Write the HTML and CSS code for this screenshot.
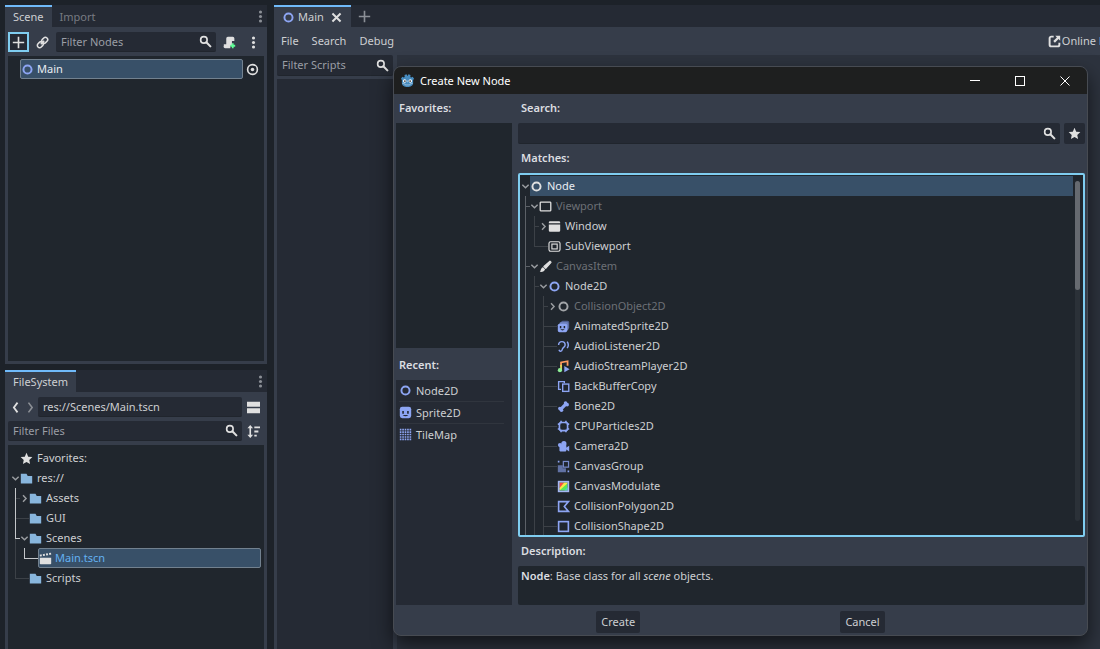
FILE: index.html
```html
<!DOCTYPE html>
<html lang="en">
<head>
    <meta charset="UTF-8">
    <meta name="viewport" content="width=device-width, initial-scale=1.0">
    <title>Create New Node</title>
    <link rel="stylesheet" href="styles.css">
</head>
<body>
    <!-- icon set -->
    <svg class="sprite" aria-hidden="true">
        <symbol id="i-circle" viewBox="0 0 16 16"><circle cx="8" cy="8" r="5" fill="none" stroke="currentColor" stroke-width="2.4"/></symbol>
        <symbol id="i-search" viewBox="0 0 16 16"><circle cx="6" cy="6" r="4" fill="none" stroke="currentColor" stroke-width="2"/><path d="M9 9l5 5" stroke="currentColor" stroke-width="2.6" stroke-linecap="round"/></symbol>
        <symbol id="i-dots" viewBox="0 0 16 16"><g fill="currentColor"><circle cx="8" cy="2.5" r="1.9"/><circle cx="8" cy="8" r="1.9"/><circle cx="8" cy="13.5" r="1.9"/></g></symbol>
        <symbol id="i-plus" viewBox="0 0 16 16"><path d="M8 1v14M1 8h14" stroke="currentColor" stroke-width="2"/></symbol>
        <symbol id="i-close" viewBox="0 0 16 16"><path d="M3 3l10 10M13 3L3 13" stroke="currentColor" stroke-width="2.4"/></symbol>
        <symbol id="i-link" viewBox="0 0 16 16"><g transform="rotate(-45 8 8)" fill="none" stroke="currentColor" stroke-width="1.9"><rect x="0.2" y="5.2" width="8" height="5.6" rx="2.8"/><rect x="7.8" y="5.2" width="8" height="5.6" rx="2.8"/><path d="M5 8h6"/></g></symbol>
        <symbol id="i-script-add" viewBox="0 0 16 16"><path d="M6 1a2 2 0 0 0-2 2v7H1v2a2 2 0 0 0 2 3h6v-3h2V6h3V3a2 2 0 0 0-2-2z" fill="#e0e0e0"/><path d="M12 9v6M9 12h6" stroke="#5fff97" stroke-width="2.2"/></symbol>
        <symbol id="i-eye" viewBox="0 0 16 16"><circle cx="8" cy="8" r="6" fill="none" stroke="currentColor" stroke-width="2"/><circle cx="8" cy="8" r="2.2" fill="currentColor"/></symbol>
        <symbol id="i-back" viewBox="0 0 16 16"><path d="M10.500 2L6 8l4.500 6" fill="none" stroke="currentColor" stroke-width="2.2"/></symbol>
        <symbol id="i-forward" viewBox="0 0 16 16"><path d="M5.500 2L10 8l-4.500 6" fill="none" stroke="currentColor" stroke-width="2"/></symbol>
        <symbol id="i-split" viewBox="0 0 16 16"><path d="M0 1h16v6H0zM0 9h16v6H0z" fill="currentColor"/></symbol>
        <symbol id="i-sort" viewBox="0 0 16 16"><path d="M4 0L.5 4H3v8H.5L4 16l3.500-4H5V4h2.500z" fill="currentColor"/><path d="M9 3h7M9 8h5M9 13h3" stroke="currentColor" stroke-width="2.200"/></symbol>
        <symbol id="i-star" viewBox="0 0 16 16"><path d="M8 1l2.100 4.700 5.100.6-3.800 3.400 1 5L8 12.200l-4.400 2.500 1-5L.8 6.300l5.100-.6z" fill="currentColor"/></symbol>
        <symbol id="i-folder" viewBox="0 0 16 16"><path d="M1 2h7l1.500 3H15v9H1z" fill="#88b6dd"/></symbol>
        <symbol id="i-scene" viewBox="0 0 16 16"><path d="M1 7h14v7a1 1 0 0 1-1 1H2a1 1 0 0 1-1-1z" fill="#e0e0e0"/><path d="M1 4.500L15 2" stroke="#e0e0e0" stroke-width="2.400" stroke-dasharray="2.400 1.500"/></symbol>
        <symbol id="i-down" viewBox="0 0 8 8"><path d="M1.200 2.500L4 5.200l2.800-2.700" fill="none" stroke="currentColor" stroke-width="1.300"/></symbol>
        <symbol id="i-right" viewBox="0 0 8 8"><path d="M2.700 1.200L5.400 4 2.700 6.800" fill="none" stroke="currentColor" stroke-width="1.300"/></symbol>
        <symbol id="i-external" viewBox="0 0 16 16"><path d="M7 2H4a2 2 0 0 0-2 2v8a2 2 0 0 0 2 2h8a2 2 0 0 0 2-2V9.500" fill="none" stroke="currentColor" stroke-width="2.400"/><path d="M9 1h6v6l-2-2-4.500 4.500-2-2L11 3z" fill="currentColor"/></symbol>
        <symbol id="i-viewport" viewBox="0 0 16 16"><rect x="1.500" y="2.500" width="13" height="11" rx="1" fill="none" stroke="currentColor" stroke-width="1.600"/></symbol>
        <symbol id="i-window" viewBox="0 0 16 16"><path d="M1 4V3a1.500 1.500 0 0 1 1.500-1.500h11A1.500 1.500 0 0 1 15 3v1zM1 5.500h14V13a1.500 1.500 0 0 1-1.500 1.500h-11A1.500 1.500 0 0 1 1 13z" fill="currentColor"/></symbol>
        <symbol id="i-subviewport" viewBox="0 0 16 16"><g fill="none" stroke="currentColor" stroke-width="1.400"><rect x="1.200" y="2.200" width="13.600" height="11.600" rx="2"/><rect x="4.800" y="5" width="6.500" height="6"/></g></symbol>
        <symbol id="i-brush" viewBox="0 0 16 16"><path d="M13.500 1.500l1.300 1.300-6.500 7.500L6 8z" fill="currentColor" stroke="currentColor" stroke-width="1.400" stroke-linejoin="round"/><path d="M5 9l2.500 2.500C7 14 4 15 1 14.500 2.500 13.500 2 9.500 5 9z" fill="currentColor"/></symbol>
        <symbol id="i-animsprite" viewBox="0 0 16 16"><rect x="5" y="1" width="10" height="10" rx="2" fill="#4f5f90"/><rect x="3" y="2.500" width="11" height="10.500" rx="2" fill="#6d80bd"/><rect x="1" y="4.500" width="11.500" height="10.500" rx="2" fill="#8da5f3"/><path d="M3.500 7.500h1.800v2.500H3.500zM8.200 7.500H10v2.500H8.200zM4 11.500h5.500q-2.700 2.600-5.500 0z" fill="#20262d"/></symbol>
        <symbol id="i-listener" viewBox="0 0 16 16"><g fill="none" stroke="#8da5f3" stroke-width="1.800"><path d="M2 6a4 4 0 0 1 8 0c0 3-3 3-3.500 5.500C6 14.500 3 14.500 2.500 12"/><path d="M12.500 2q2.800 4 0 8"/></g></symbol>
        <symbol id="i-stream" viewBox="0 0 16 16"><path d="M5 8V3l8-1.500V7" fill="none" stroke="#ff9a5f" stroke-width="2.200"/><path d="M5 6v6.500" stroke="#e1da5b" stroke-width="2.200"/><circle cx="3.600" cy="12.500" r="2.600" fill="#8eef97"/><path d="M9 7.500l6.500 3.800L9 15z" fill="#8da5f3"/></symbol>
        <symbol id="i-backbuffer" viewBox="0 0 16 16"><g fill="none" stroke="#8da5f3" stroke-width="1.700"><path d="M5 11.500H2V2h7v2"/><rect x="7" y="5" width="7.500" height="9"/></g></symbol>
        <symbol id="i-bone" viewBox="0 0 16 16"><path d="M4.500 11.500l7-7" stroke="#8da5f3" stroke-width="4"/><g fill="#8da5f3"><circle cx="10.500" cy="3.600" r="2.200"/><circle cx="12.500" cy="5.700" r="2.200"/><circle cx="3.500" cy="10.500" r="2.200"/><circle cx="5.500" cy="12.600" r="2.200"/></g></symbol>
        <symbol id="i-particles" viewBox="0 0 16 16"><rect x="3" y="3" width="10" height="10" rx="2" fill="none" stroke="#8da5f3" stroke-width="2"/><path d="M4 5H1M4 11H1M12 5h3M12 11h3M5 4V1M11 4V1M5 12v3M11 12v3" stroke="#8da5f3" stroke-width="2"/></symbol>
        <symbol id="i-camera" viewBox="0 0 16 16"><g fill="#8da5f3"><circle cx="8.500" cy="4.500" r="3.200"/><circle cx="3.700" cy="6.300" r="2.600"/><rect x="3" y="6" width="8.500" height="8" rx="1"/><path d="M11 9.500l4-2.500v7l-4-2.500z"/></g></symbol>
        <symbol id="i-group" viewBox="0 0 16 16"><g fill="#8da5f3"><path d="M1 1h2v2H1zM13 13h2v2h-2z"/><path d="M1 6.500h6V10h4v5H1z" opacity=".6"/></g><rect x="7.800" y="1.800" width="6.400" height="7" fill="none" stroke="#8da5f3" stroke-width="1.500" opacity=".8"/></symbol>
        <symbol id="i-modulate" viewBox="0 0 16 16"><path d="M3 3h10v10H3z" fill="#58e858"/><path d="M3 3h6L3 10z" fill="#ff4545"/><path d="M9 3h4v1L3 13v-3z" fill="#ffe345"/><path d="M13 9v4H9z" fill="#45d7c0"/><rect x="2" y="2" width="12" height="12" fill="none" stroke="#a5b7f3" stroke-width="2"/></symbol>
        <symbol id="i-polygon" viewBox="0 0 16 16"><path d="M2 2h12L9 8l5 6H2z" fill="none" stroke="#8da5f3" stroke-width="2"/></symbol>
        <symbol id="i-shape" viewBox="0 0 16 16"><rect x="2" y="2" width="12" height="12" fill="none" stroke="#8da5f3" stroke-width="2"/></symbol>
        <symbol id="i-sprite" viewBox="0 0 16 16"><rect x="1" y="1" width="14" height="14" rx="3" fill="#8da5f3"/><path d="M4 6h2v3.500H4zM10 6h2v3.500h-2zM4.500 11h7q-3.500 3.500-7 0z" fill="#252a34"/></symbol>
        <symbol id="i-tilemap" viewBox="0 0 16 16"><path d="M2 1v14M5 1v14M8 1v14M11 1v14M14 1v14" stroke="#8da5f3" stroke-width="2" stroke-dasharray="2 1"/></symbol>
        <symbol id="i-godot" viewBox="0 0 16 16"><path d="M1 6l1.500-2 1.500.8 1-.6L4.800 2 7 1.200 7.700 3h.6L9 1.200l2.200.8-.2 2.200 1 .6 1.500-.8L15 6l-1 1.500V11c0 2.500-3 4-6 4s-6-1.500-6-4V7.500z" fill="#478cbf"/><circle cx="5" cy="8.500" r="1.900" fill="#fff"/><circle cx="11" cy="8.500" r="1.900" fill="#fff"/><circle cx="5.200" cy="8.600" r="1" fill="#414042"/><circle cx="10.800" cy="8.600" r="1" fill="#414042"/><path d="M8 8v2M2.500 11l2.500.5.500 1.200h5l.5-1.200 2.500-.5" fill="none" stroke="#b9d3e8" stroke-width=".7"/></symbol>
    </svg>

    <div class="editor">
        <aside class="docks">
            <!-- scene dock -->
            <section class="dock">
                <div class="tabs">
                    <button class="tab active">Scene</button>
                    <button class="tab">Import</button>
                    <button class="tabs-menu" aria-label="Scene dock menu"><svg class="icon"><use href="#i-dots"/></svg></button>
                </div>
                <div class="dock-body">
                    <div class="toolbar">
                        <button class="tool focused" aria-label="Add node"><svg class="icon"><use href="#i-plus"/></svg></button>
                        <button class="tool" aria-label="Instantiate scene"><svg class="icon"><use href="#i-link"/></svg></button>
                        <label class="field">
                            <input type="text" placeholder="Filter Nodes" aria-label="Filter Nodes">
                            <svg class="icon"><use href="#i-search"/></svg>
                        </label>
                        <button class="tool" aria-label="Attach script"><svg class="icon"><use href="#i-script-add"/></svg></button>
                        <button class="tool" aria-label="More options"><svg class="icon"><use href="#i-dots"/></svg></button>
                    </div>
                    <ul class="tree">
                        <li>
                            <div class="row">
                                <span class="arrow"></span>
                                <span class="item selected outlined"><svg class="icon c2d"><use href="#i-circle"/></svg>Main</span>
                                <button class="eye" aria-label="Toggle visibility"><svg class="icon"><use href="#i-eye"/></svg></button>
                            </div>
                        </li>
                    </ul>
                </div>
            </section>

            <!-- filesystem dock -->
            <section class="dock filesystem">
                <div class="tabs">
                    <button class="tab active">FileSystem</button>
                    <button class="tabs-menu" aria-label="FileSystem dock menu"><svg class="icon"><use href="#i-dots"/></svg></button>
                </div>
                <div class="dock-body">
                    <div class="toolbar">
                        <button class="tool narrow" aria-label="Back"><svg class="icon"><use href="#i-back"/></svg></button>
                        <button class="tool narrow disabled" aria-label="Forward"><svg class="icon"><use href="#i-forward"/></svg></button>
                        <label class="field"><input type="text" value="res://Scenes/Main.tscn" aria-label="Path"></label>
                        <button class="tool" aria-label="Toggle split mode"><svg class="icon"><use href="#i-split"/></svg></button>
                    </div>
                    <div class="toolbar">
                        <label class="field">
                            <input type="text" placeholder="Filter Files" aria-label="Filter Files">
                            <svg class="icon"><use href="#i-search"/></svg>
                        </label>
                        <button class="tool" aria-label="Sort files"><svg class="icon"><use href="#i-sort"/></svg></button>
                    </div>
                    <ul class="tree">
                        <li><div class="row"><span class="arrow"></span><span class="item"><svg class="icon"><use href="#i-star"/></svg>Favorites:</span></div></li>
                        <li>
                            <div class="row"><svg class="arrow"><use href="#i-down"/></svg><span class="item"><svg class="icon"><use href="#i-folder"/></svg>res://</span></div>
                            <ul>
                                <li class="pass"><div class="row"><svg class="arrow"><use href="#i-right"/></svg><span class="item"><svg class="icon"><use href="#i-folder"/></svg>Assets</span></div></li>
                                <li class="pass leaf"><div class="row"><span class="arrow"></span><span class="item"><svg class="icon"><use href="#i-folder"/></svg>GUI</span></div></li>
                                <li class="reach">
                                    <div class="row"><svg class="arrow"><use href="#i-down"/></svg><span class="item"><svg class="icon"><use href="#i-folder"/></svg>Scenes</span></div>
                                    <ul>
                                        <li class="reach leaf"><div class="row"><span class="arrow"></span><span class="item selected outlined current"><svg class="icon"><use href="#i-scene"/></svg>Main.tscn</span></div></li>
                                    </ul>
                                </li>
                                <li class="leaf"><div class="row"><span class="arrow"></span><span class="item"><svg class="icon"><use href="#i-folder"/></svg>Scripts</span></div></li>
                            </ul>
                        </li>
                    </ul>
                </div>
            </section>
        </aside>

        <!-- script editor -->
        <main class="workspace">
            <div class="tabs">
                <button class="tab active scene-tab"><svg class="icon c2d"><use href="#i-circle"/></svg>Main<svg class="icon close"><use href="#i-close"/></svg></button>
                <button class="new-tab" aria-label="New scene"><svg class="icon"><use href="#i-plus"/></svg></button>
            </div>
            <div class="workspace-body">
                <nav class="menu">
                    <button>File</button>
                    <button>Search</button>
                    <button>Debug</button>
                    <a class="docs" href="#"><svg class="icon"><use href="#i-external"/></svg>Online Docs</a>
                </nav>
                <div class="script-area">
                    <div class="script-list">
                        <label class="field">
                            <input type="text" placeholder="Filter Scripts" aria-label="Filter Scripts">
                            <svg class="icon"><use href="#i-search"/></svg>
                        </label>
                        <div class="scripts"></div>
                    </div>
                    <div class="code"></div>
                </div>
            </div>
        </main>
    </div>

    <!-- create node window -->
    <div class="dialog" role="dialog" aria-labelledby="dialog-title">
        <header class="titlebar">
            <svg class="logo"><use href="#i-godot"/></svg>
            <h1 id="dialog-title">Create New Node</h1>
            <button aria-label="Minimize"><svg viewBox="0 0 10 10"><path d="M0 4.500h10"/></svg></button>
            <button aria-label="Maximize"><svg viewBox="0 0 10 10"><rect x=".5" y=".5" width="9" height="9"/></svg></button>
            <button aria-label="Close"><svg viewBox="0 0 10 10"><path d="M.5.5l9 9M9.500.5l-9 9"/></svg></button>
        </header>
        <div class="dialog-body">
            <div class="side">
                <section class="group">
                    <h2>Favorites:</h2>
                    <ul class="list favorites"></ul>
                </section>
                <section class="group">
                    <h2>Recent:</h2>
                    <ul class="list">
                        <li><svg class="icon c2d"><use href="#i-circle"/></svg>Node2D</li>
                        <li><svg class="icon"><use href="#i-sprite"/></svg>Sprite2D</li>
                        <li><svg class="icon"><use href="#i-tilemap"/></svg>TileMap</li>
                    </ul>
                </section>
            </div>
            <div class="content">
                <label class="heading" for="search">Search:</label>
                <div class="search-row">
                    <div class="field">
                        <input type="text" id="search">
                        <svg class="icon"><use href="#i-search"/></svg>
                    </div>
                    <button class="favorite" aria-label="Add to favorites"><svg class="icon"><use href="#i-star"/></svg></button>
                </div>
                <h2>Matches:</h2>
                <div class="matches">
                    <ul class="tree">
                        <li>
                            <div class="row"><svg class="arrow"><use href="#i-down"/></svg><span class="item selected"><svg class="icon"><use href="#i-circle"/></svg>Node</span></div>
                            <ul class="main-branch">
                                <li>
                                    <div class="row"><svg class="arrow"><use href="#i-down"/></svg><span class="item abstract"><svg class="icon"><use href="#i-viewport"/></svg>Viewport</span></div>
                                    <ul>
                                        <li><div class="row"><svg class="arrow"><use href="#i-right"/></svg><span class="item"><svg class="icon"><use href="#i-window"/></svg>Window</span></div></li>
                                        <li class="leaf"><div class="row"><span class="arrow"></span><span class="item"><svg class="icon"><use href="#i-subviewport"/></svg>SubViewport</span></div></li>
                                    </ul>
                                </li>
                                <li class="more">
                                    <div class="row"><svg class="arrow"><use href="#i-down"/></svg><span class="item abstract"><svg class="icon"><use href="#i-brush"/></svg>CanvasItem</span></div>
                                    <ul>
                                        <li class="more">
                                            <div class="row"><svg class="arrow"><use href="#i-down"/></svg><span class="item"><svg class="icon c2d"><use href="#i-circle"/></svg>Node2D</span></div>
                                            <ul>
                                                <li><div class="row"><svg class="arrow"><use href="#i-right"/></svg><span class="item abstract"><svg class="icon dim"><use href="#i-circle"/></svg>CollisionObject2D</span></div></li>
                                                <li class="leaf"><div class="row"><span class="arrow"></span><span class="item"><svg class="icon"><use href="#i-animsprite"/></svg>AnimatedSprite2D</span></div></li>
                                                <li class="leaf"><div class="row"><span class="arrow"></span><span class="item"><svg class="icon"><use href="#i-listener"/></svg>AudioListener2D</span></div></li>
                                                <li class="leaf"><div class="row"><span class="arrow"></span><span class="item"><svg class="icon"><use href="#i-stream"/></svg>AudioStreamPlayer2D</span></div></li>
                                                <li class="leaf"><div class="row"><span class="arrow"></span><span class="item"><svg class="icon"><use href="#i-backbuffer"/></svg>BackBufferCopy</span></div></li>
                                                <li class="leaf"><div class="row"><span class="arrow"></span><span class="item"><svg class="icon"><use href="#i-bone"/></svg>Bone2D</span></div></li>
                                                <li class="leaf"><div class="row"><span class="arrow"></span><span class="item"><svg class="icon"><use href="#i-particles"/></svg>CPUParticles2D</span></div></li>
                                                <li class="leaf"><div class="row"><span class="arrow"></span><span class="item"><svg class="icon"><use href="#i-camera"/></svg>Camera2D</span></div></li>
                                                <li class="leaf"><div class="row"><span class="arrow"></span><span class="item"><svg class="icon"><use href="#i-group"/></svg>CanvasGroup</span></div></li>
                                                <li class="leaf"><div class="row"><span class="arrow"></span><span class="item"><svg class="icon"><use href="#i-modulate"/></svg>CanvasModulate</span></div></li>
                                                <li class="leaf"><div class="row"><span class="arrow"></span><span class="item"><svg class="icon"><use href="#i-polygon"/></svg>CollisionPolygon2D</span></div></li>
                                                <li class="leaf more"><div class="row"><span class="arrow"></span><span class="item"><svg class="icon"><use href="#i-shape"/></svg>CollisionShape2D</span></div></li>
                                            </ul>
                                        </li>
                                    </ul>
                                </li>
                            </ul>
                        </li>
                    </ul>
                    <div class="scrollbar"><div class="thumb"></div></div>
                </div>
                <h2>Description:</h2>
                <p class="description"><b>Node</b>: Base class for all <i>scene</i> objects.</p>
            </div>
        </div>
        <footer class="actions">
            <button>Create</button>
            <button>Cancel</button>
        </footer>
    </div>
</body>
</html>
```

FILE: styles.css
```css
:root {
    --bg: #1d2229;
    --panel: #363d4a;
    --tabbar: #252a34;
    --field: #252a34;
    --tree: #20262d;
    --text: #cdcfd2;
    --muted: #9a9ea5;
    --select: #385068;
    --accent: #70bafa;
    --line: #3c4147;
}

* {
    box-sizing: border-box;
}

body {
    margin: 0;
    height: 100vh;
    overflow: hidden;
    background: var(--bg);
    color: var(--text);
    font-family: "Noto Sans", "Open Sans", sans-serif;
    font-size: 11px;
    line-height: 18px;
}

button,
input {
    margin: 0;
    padding: 0;
    border: none;
    background: none;
    color: inherit;
    font: inherit;
}

ul {
    margin: 0;
    padding: 0;
    list-style: none;
}

h1,
h2,
p {
    margin: 0;
}

.sprite {
    display: none;
}

.icon {
    flex: none;
    display: block;
    width: 13px;
    height: 13px;
    color: #e0e0e0;
}

.c2d {
    color: #8da5f3;
}

.editor {
    display: flex;
    gap: 7px;
    height: 100%;
    padding: 5px 0 0 5px;
}

/* docks */

.docks {
    flex: none;
    display: flex;
    flex-direction: column;
    gap: 6px;
    width: 262px;
}

.dock {
    flex: 359;
    display: flex;
    flex-direction: column;
    min-height: 0;
}

.filesystem {
    flex: 279;
}

.tabs {
    flex: none;
    display: flex;
    align-items: stretch;
    height: 22px;
    background: var(--tabbar);
}

.tab {
    display: flex;
    align-items: center;
    padding: 0 8px;
    border-top: 2px solid transparent;
    color: #777b82;
}

.tab.active {
    background: var(--panel);
    border-color: var(--accent);
    color: var(--text);
}

.tabs-menu {
    margin-left: auto;
}

.tabs-menu .icon {
    color: #8b8f96;
}

.dock-body {
    flex: 1;
    display: flex;
    flex-direction: column;
    gap: 4px;
    min-height: 0;
    padding: 5px 3px 3px;
    background: var(--panel);
}

.filesystem .dock-body {
    padding-bottom: 0;
}

.toolbar {
    display: flex;
    gap: 3px;
    height: 20px;
}

.filesystem .toolbar {
    gap: 1px;
}

.tool {
    flex: none;
    display: flex;
    align-items: center;
    justify-content: center;
    width: 21px;
}

.tool.narrow {
    width: 14px;
}

.tool.disabled {
    opacity: 0.5;
}

.tool.focused {
    border: 2px solid #7fcdf0;
    background: var(--field);
}

.field {
    flex: 1;
    display: flex;
    align-items: center;
    min-width: 0;
    padding: 0 4px 0 5px;
    background: var(--field);
    border-bottom: 1px solid #20252d;
    border-radius: 2px;
}

.field input {
    flex: 1;
    min-width: 0;
    outline: none;
}

.field input::placeholder {
    color: var(--muted);
    opacity: 1;
}

/* trees, guide lines are painted as backgrounds of the list items */

.tree {
    flex: 1;
    min-height: 0;
    padding: 3px;
    background: var(--tree);
}

.tree ul {
    margin-left: 4px;
}

.tree ul li {
    --v: var(--line);
    --h: var(--line);
    --below: var(--line);
    --hw: 5px;
    padding-left: 5px;
    background:
        linear-gradient(var(--v), var(--v)) 0 0 / 1px 11px no-repeat,
        linear-gradient(var(--h), var(--h)) 0 10px / var(--hw) 1px no-repeat,
        linear-gradient(var(--below), var(--below)) 0 11px / 1px 100% no-repeat;
}

.tree ul li.leaf {
    --hw: 14px;
}

.tree ul li:last-child:not(.more) {
    --below: transparent;
}

.tree ul.main-branch > li {
    --v: #5c6167;
    --h: #5c6167;
    --below: #5c6167;
}

.tree ul li.pass {
    --v: #c3c6c9;
    --below: #c3c6c9;
}

.tree ul li.reach {
    --v: #c3c6c9;
    --h: #c3c6c9;
}

.row {
    display: flex;
    height: 20px;
}

.arrow {
    flex: none;
    align-self: center;
    width: 9px;
    height: 9px;
    color: #9a9da1;
}

.item {
    flex: 1;
    display: flex;
    align-items: center;
    gap: 4px;
    min-width: 0;
}

.item.selected {
    background: var(--select);
    color: #e8edf2;
}

.item.outlined {
    gap: 3px;
    border: 1px solid #72818f;
    border-radius: 2px;
}

.item.current {
    color: #63b0f2;
}

.item.abstract {
    color: #6c7076;
}

.icon.dim {
    color: #a2a5a8;
}

.eye {
    padding: 0 2px 0 3px;
}

/* script workspace */

.workspace {
    flex: 1;
    display: flex;
    flex-direction: column;
    min-width: 0;
}

.scene-tab {
    gap: 3px;
}

.scene-tab .close {
    margin-left: 3px;
}

.new-tab {
    padding: 0 7px;
}

.new-tab .icon {
    color: #8b8f96;
}

.workspace-body {
    flex: 1;
    display: flex;
    flex-direction: column;
    min-height: 0;
    padding: 5px 0 0 3px;
    background: var(--panel);
}

.menu {
    display: flex;
    align-items: center;
    gap: 13px;
    height: 18px;
    padding-left: 4px;
    white-space: nowrap;
}

.docs {
    display: flex;
    align-items: center;
    gap: 1px;
    margin: 0 -24px 0 auto;
    color: inherit;
    text-decoration: none;
}

.script-area {
    flex: 1;
    display: flex;
    gap: 4px;
    min-height: 0;
    padding-top: 5px;
}

.script-list {
    flex: none;
    display: flex;
    flex-direction: column;
    gap: 3px;
    width: 116px;
}

.script-list .field {
    flex: none;
    height: 21px;
}

.scripts {
    flex: 1;
    background: var(--tabbar);
}

.code {
    flex: 1;
    background: #2d333e;
}

/* create node window */

.dialog {
    position: absolute;
    top: 66px;
    right: 12px;
    bottom: 13px;
    left: 393px;
    display: flex;
    flex-direction: column;
    overflow: hidden;
    border: 1px solid #474b52;
    border-radius: 8px;
    background: var(--panel);
    box-shadow: 0 9px 20px rgba(0, 0, 0, 0.6);
}

.titlebar {
    flex: none;
    display: flex;
    align-items: center;
    height: 27px;
    padding-left: 6px;
    background: #1e1f1f;
    color: #fff;
}

.logo {
    width: 15px;
    height: 15px;
}

.titlebar h1 {
    flex: 1;
    padding-left: 5px;
    font-size: 11px;
    font-weight: 400;
}

.titlebar button {
    display: flex;
    align-items: center;
    justify-content: center;
    width: 45px;
    height: 100%;
}

.titlebar button svg {
    width: 10px;
    height: 10px;
    fill: none;
    stroke: #fff;
}

.dialog-body {
    flex: 1;
    display: flex;
    gap: 6px;
    min-height: 0;
    padding: 0 2px;
}

.dialog h2,
.heading {
    flex: none;
    padding: 0 3px 2px;
    font-size: 11px;
    font-weight: 600;
    line-height: 27px;
    color: #dcdee1;
}

.side {
    flex: none;
    display: flex;
    flex-direction: column;
    gap: 3px;
    width: 116px;
}

.group {
    flex: 1;
    display: flex;
    flex-direction: column;
    min-height: 0;
}

.list {
    flex: 1;
    padding: 0 8px 0 3px;
    background: var(--field);
}

.favorites {
    background: var(--tree);
}

.list li {
    display: flex;
    align-items: center;
    gap: 4px;
    height: 22px;
    border-bottom: 1px solid #30353e;
}

.list li:last-child {
    border-color: transparent;
}

.content {
    flex: 1;
    display: flex;
    flex-direction: column;
    min-width: 0;
}

.search-row {
    flex: none;
    display: flex;
    gap: 4px;
    height: 21px;
}

.favorite {
    display: flex;
    align-items: center;
    justify-content: center;
    width: 21px;
    background: var(--field);
    border-radius: 2px;
}

.matches {
    flex: 1;
    display: flex;
    gap: 2px;
    min-height: 0;
    overflow: hidden;
    padding: 1px 3px 0 1px;
    border: 2px solid #7fcdf0;
    border-radius: 2px;
    background: var(--tree);
}

.matches .tree {
    padding: 0;
}

.scrollbar {
    width: 5px;
    margin: 5px 0 14px;
    border-radius: 3px;
    background: #2b3138;
}

.thumb {
    height: 32%;
    border-radius: 3px;
    background: #666a70;
}

.description {
    flex: none;
    height: 39px;
    padding: 1px 3px;
    background: var(--tree);
    border-radius: 2px;
}

.description b {
    font-weight: 600;
    color: #dcdee1;
}

.actions {
    flex: none;
    display: flex;
    justify-content: space-evenly;
    padding: 6px 2px 2px;
}

.actions button {
    height: 22px;
    padding: 0 5px;
    background: var(--field);
    border-radius: 2px;
}
```
